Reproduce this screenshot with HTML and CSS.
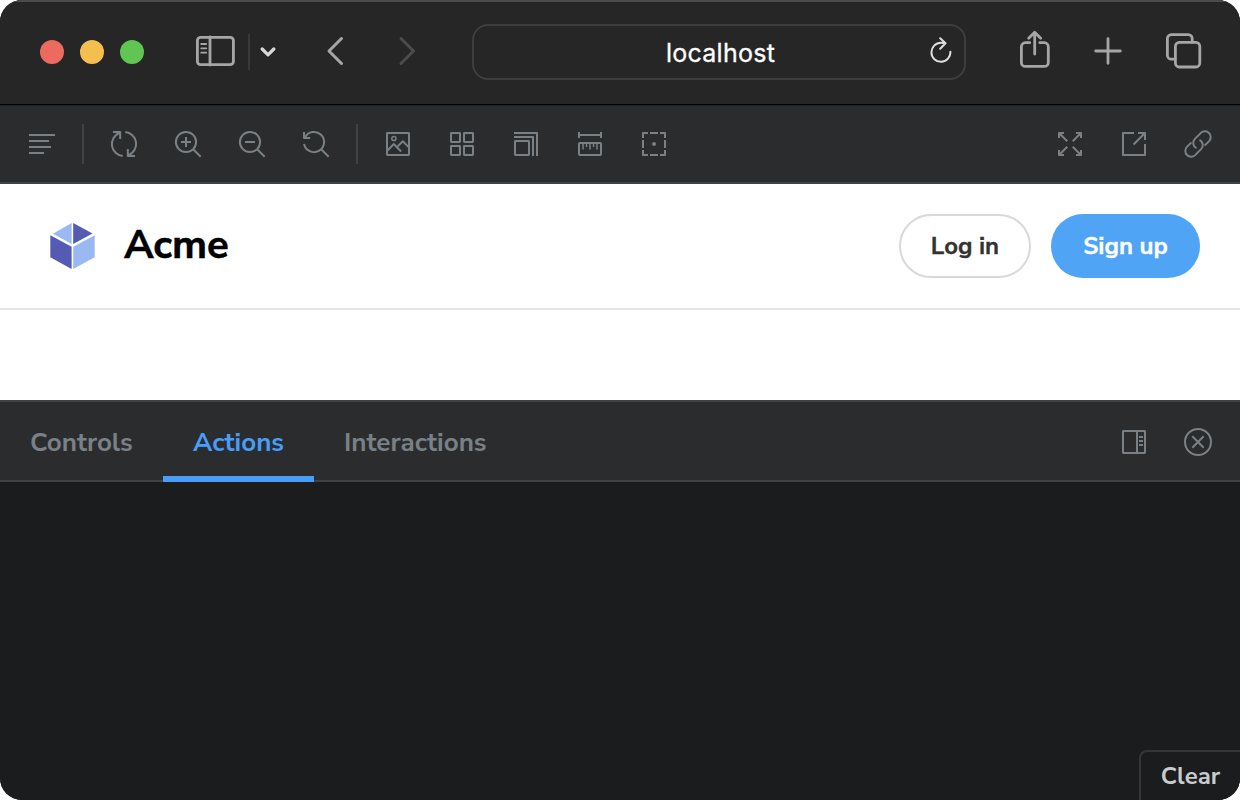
FILE: index.html
```html
<!DOCTYPE html>
<html lang="en">
<head>
<meta charset="utf-8">
<title>Acme</title>
<link rel="stylesheet" href="styles.css">
</head>
<body>
<div class="window">
  <header class="chrome">
    <div class="lights"><span class="light red"></span><span class="light yellow"></span><span class="light green"></span></div>
    <svg class="sidebar-icon" width="40" height="32" viewBox="0 0 40 32"><rect x="2.4" y="2.3" width="36" height="27.4" rx="3.2"/><path d="M15 2v28"/><path class="thin" d="M6.2 9h5M6.2 13.3h5M6.2 17.7h5"/></svg>
    <span class="chrome-divider"></span>
    <svg class="chevron" width="16" height="12" viewBox="0 0 16 12"><path d="M2.2 3l5.8 5.8L13.8 3"/></svg>
    <svg class="back" width="20" height="32" viewBox="0 0 20 32"><path d="M16.5 3.5L4 16l12.5 12.5"/></svg>
    <svg class="forward" width="20" height="32" viewBox="0 0 20 32"><path d="M4 3.5L16.5 16 4 28.5"/></svg>
    <div class="address"><span class="url">localhost</span>
      <svg class="reload" width="24" height="28" viewBox="0 0 24 28"><path d="M21.4 14.7A9.5 9.5 0 1 1 12 5.8c1.8 0 3.3.1 4.5.4M11.2 1.2l5.3 5-5.3 5.5"/></svg>
    </div>
    <svg class="share" width="32" height="40" viewBox="0 0 32 40"><path d="M10.7 12.7H6.4a4 4 0 0 0-4 4v15.7a4 4 0 0 0 4 4h18.9a4 4 0 0 0 4-4V16.7a4 4 0 0 0-4-4h-4.5M15.7 24V2.5M9.7 8.2l6-6 6 6"/></svg>
    <svg class="plus" width="28" height="28" viewBox="0 0 28 28"><path d="M14 1.7v24.6M1.7 14h24.6"/></svg>
    <svg class="windows" width="36" height="36" viewBox="0 0 36 36"><rect x="9.4" y="9.4" width="24.4" height="24.6" rx="4"/><path d="M9 26.2H5.4a4 4 0 0 1-4-4V5.6a4 4 0 0 1 4-4h16.8a4 4 0 0 1 4 4V9"/></svg>
  </header>
  <nav class="toolbar">
    <svg class="icon" viewBox="0 0 28 28"><path d="M1 5h26M1 11h20M1 17h22M1 23h15"/></svg>
    <span class="divider"></span>
    <svg class="icon" viewBox="0 0 28 28"><path d="M12.7 26A12 12 0 0 1 9.2 3M3 2h7.2v7M15.3 2a12 12 0 0 1 3.5 23M25 26h-7.2v-7"/></svg>
    <svg class="icon" viewBox="0 0 28 28"><circle cx="12" cy="12" r="10.1"/><path d="M19.2 19.2l7.5 7.5M7 12h10M12 7v10"/></svg>
    <svg class="icon" viewBox="0 0 28 28"><circle cx="12" cy="12" r="10.1"/><path d="M19.2 19.2l7.5 7.5M7 12h10"/></svg>
    <svg class="icon" viewBox="0 0 28 28"><path d="M2.1 14A10.1 10.1 0 1 0 3 7.5M2 2v6h6.2M19.2 19.2l7.5 7.5"/></svg>
    <span class="divider"></span>
    <svg class="icon" viewBox="0 0 28 28"><rect x="3" y="3" width="22" height="22" rx=".4"/><circle class="fine" cx="9.9" cy="8.5" r="2.1"/><path d="M3 21l6.8-7 7.3 7.5M13.7 16.4l5.1-5.1L25 17.4"/></svg>
    <svg class="icon" viewBox="0 0 28 28"><rect x="3" y="3" width="9" height="9" rx=".4"/><rect x="16" y="3" width="9" height="9" rx=".4"/><rect x="3" y="16" width="9" height="9" rx=".4"/><rect x="16" y="16" width="9" height="9" rx=".4"/></svg>
    <svg class="icon" viewBox="0 0 28 28"><path d="M2 3h23v23M2 7h19v19"/><rect x="3" y="11" width="14" height="14" rx=".4"/></svg>
    <svg class="icon" viewBox="0 0 28 28"><path d="M3 2v6M25 2v6M3 5h22"/><rect x="3" y="13" width="22" height="12" rx=".8"/><path class="fine" d="M7 13v6.5M10.5 13v4M14 13v6.5M17.5 13v4M21 13v6.5"/></svg>
    <svg class="icon" viewBox="0 0 28 28"><path d="M8 3H3v5M20 3h5v5M8 25H3v-5M20 25h5v-5M10 3h8M10 25h8M3 10v8M25 10v8"/><circle class="dot" cx="14" cy="14" r="2"/></svg>
    <span class="spacer"></span>
    <svg class="icon" viewBox="0 0 28 28"><path d="M3 8V3h5M3 3l8.3 8.3M20 3h5v5M25 3l-8.3 8.3M3 20v5h5M3 25l8.3-8.3M25 20v5h-5M25 25l-8.3-8.3"/></svg>
    <svg class="icon" viewBox="0 0 28 28"><path d="M14 3H3v22h22V14M18 3h7v7M25 3L13.5 14.5"/></svg>
    <svg class="icon" viewBox="0 0 28 28"><path d="M12.5 18.2A5.8 5.8 0 0 1 10.9 8.9l6-6a5.8 5.8 0 0 1 8.2 8.2l-4.5 4.5M15.5 9.8a5.8 5.8 0 0 1 1.6 9.3l-6 6a5.8 5.8 0 0 1-8.2-8.2l4.5-4.5"/></svg>
  </nav>
  <main class="preview">
    <div class="site-header">
      <svg class="logo" width="48" height="48" viewBox="0 0 48 48"><path class="pale" d="M21.6 1v21L3 11.7z"/><path class="deep" d="M23.2 1l19.3 10.6L23.2 22z"/><path class="deep" d="M.3 13.2L21.6 24.7V47L.3 35.3z"/><path class="pale" d="M44.7 13.2L23.2 24.7V47l21.5-11.7z"/></svg>
      <h1 class="brand">Acme</h1>
      <button class="button login"><span>Log in</span></button>
      <button class="button signup"><span>Sign up</span></button>
    </div>
  </main>
  <section class="panel">
    <div class="tabs">
      <div class="tab controls">Controls</div>
      <div class="tab active">Actions</div>
      <div class="tab interactions">Interactions</div>
      <span class="spacer"></span>
      <svg class="icon" viewBox="0 0 28 28"><rect x="3" y="3" width="22" height="22" rx=".4"/><path d="M17 3v22M19 9h4M19 13h4M19 17h4"/></svg>
      <svg class="icon" viewBox="0 0 28 28"><circle cx="14" cy="14" r="13"/><path d="M8.3 8.3l11.4 11.4M19.7 8.3L8.3 19.7"/></svg>
    </div>
    <div class="panel-body"><button class="clear">Clear</button></div>
  </section>
</div>
</body>
</html>
```
FILE: styles.css
```css
* { box-sizing: border-box; }
body { margin: 0; background: #fff; font-family: "Nunito Sans", Nunito, "Open Sans", sans-serif; }
svg { display: block; flex: none; fill: none; stroke-linecap: round; stroke-linejoin: round; }
button { font: inherit; padding: 0; }
.window { width: 1240px; height: 800px; border-radius: 22px; overflow: hidden; display: flex; flex-direction: column; background: #1b1c1d; }
.chrome { height: 105px; flex: none; display: flex; align-items: center; background: #262626; border-top: 2px solid #4b4c4c; border-bottom: 1px solid #000; padding: 0 36px 2px 40px; stroke: #a6a6a6; stroke-width: 2.8; }
.lights { display: flex; gap: 16px; }
.light { width: 24px; height: 24px; border-radius: 50%; }
.red { background: #ed6a5e; }
.yellow { background: #f5bf4f; }
.green { background: #61c554; }
.sidebar-icon { margin: -3px 0 0 51px; }
.thin { stroke-width: 1.8; }
.chrome-divider { width: 2px; height: 36px; margin-left: 13px; background: #393939; }
.chevron { margin-left: 10px; stroke: #d8d8d8; stroke-width: 3.2; }
.back { margin: -2px 0 0 49px; stroke-width: 3; }
.forward { margin: -2px 0 0 52px; stroke: #4c4c4c; stroke-width: 3; }
.address { width: 494px; flex: none; height: 56px; margin-left: 55px; border: 2px solid #3e3e3e; border-radius: 16px; display: flex; align-items: center; }
.url { margin: 1px 0 0 192px; width: 110px; font: 400 25px Inter, sans-serif; letter-spacing: .25px; color: #fff; -webkit-text-stroke: .3px #fff; }
.reload { margin: -2px 0 0 153px; stroke: #dedede; stroke-width: 2; }
.share { margin: -4px 0 0 53px; }
.plus { margin: -3px 0 0 42.5px; }
.windows { margin: -3px 0 0 44.5px; }
.toolbar { height: 79px; flex: none; display: flex; align-items: center; gap: 36px; padding: 0 28px; background: #2b2c2e; border-top: 1px solid #252526; border-bottom: 2px solid #414243; }
.icon { width: 28px; height: 28px; stroke: #798186; stroke-width: 2; stroke-linecap: butt; }
.fine { stroke-width: 1.5; }
.dot { fill: #798186; stroke: none; }
.divider { width: 2px; height: 40px; background: #414243; margin: 0 -10px; }
.spacer { flex: 1; }
.preview { height: 216px; flex: none; background: #fff; }
.site-header { height: 126px; display: flex; align-items: center; padding: 0 40px 0 50px; border-bottom: 2px solid #e4e4e4; }
.pale { fill: #9ab8f2; }
.deep { fill: #555ab3; }
.brand { margin: -3px 0 0 26px; flex: 1; font-size: 40px; line-height: 48px; font-weight: 700; letter-spacing: -.2px; color: #000; -webkit-text-stroke: .5px #000; }
.button { height: 64px; border-radius: 32px; font-size: 24px; font-weight: 700; -webkit-text-stroke: .3px; }
.login { width: 132px; border: 2px solid #d9d9d9; background: transparent; color: #333; }
.signup { width: 149px; margin-left: 20px; border: 0; background: #50a4f6; color: #fff; }
.panel { flex: 1; display: flex; flex-direction: column; }
.tabs { height: 82px; display: flex; align-items: center; padding: 2px 28px 0 0; gap: 36px; background: #2b2c2e; border-top: 2px solid #414243; border-bottom: 2px solid #414243; }
.tab { height: 80px; margin: -2px -36px 0 0; padding-left: 30px; font-size: 26px; line-height: 82px; font-weight: 700; color: #798186; align-self: flex-start; white-space: nowrap; }
.controls { width: 163px; }
.active { width: 151px; color: #479df8; border-bottom: 6px solid #479df8; }
.panel-body { flex: 1; display: flex; align-items: flex-end; justify-content: flex-end; background: #1b1c1d; }
.clear { width: 101px; height: 50px; border: 2px solid #343536; border-right: 0; border-bottom: 0; border-top-left-radius: 8px; background: #1b1c1d; color: #c9cccf; font-size: 24px; font-weight: 700; }
```
